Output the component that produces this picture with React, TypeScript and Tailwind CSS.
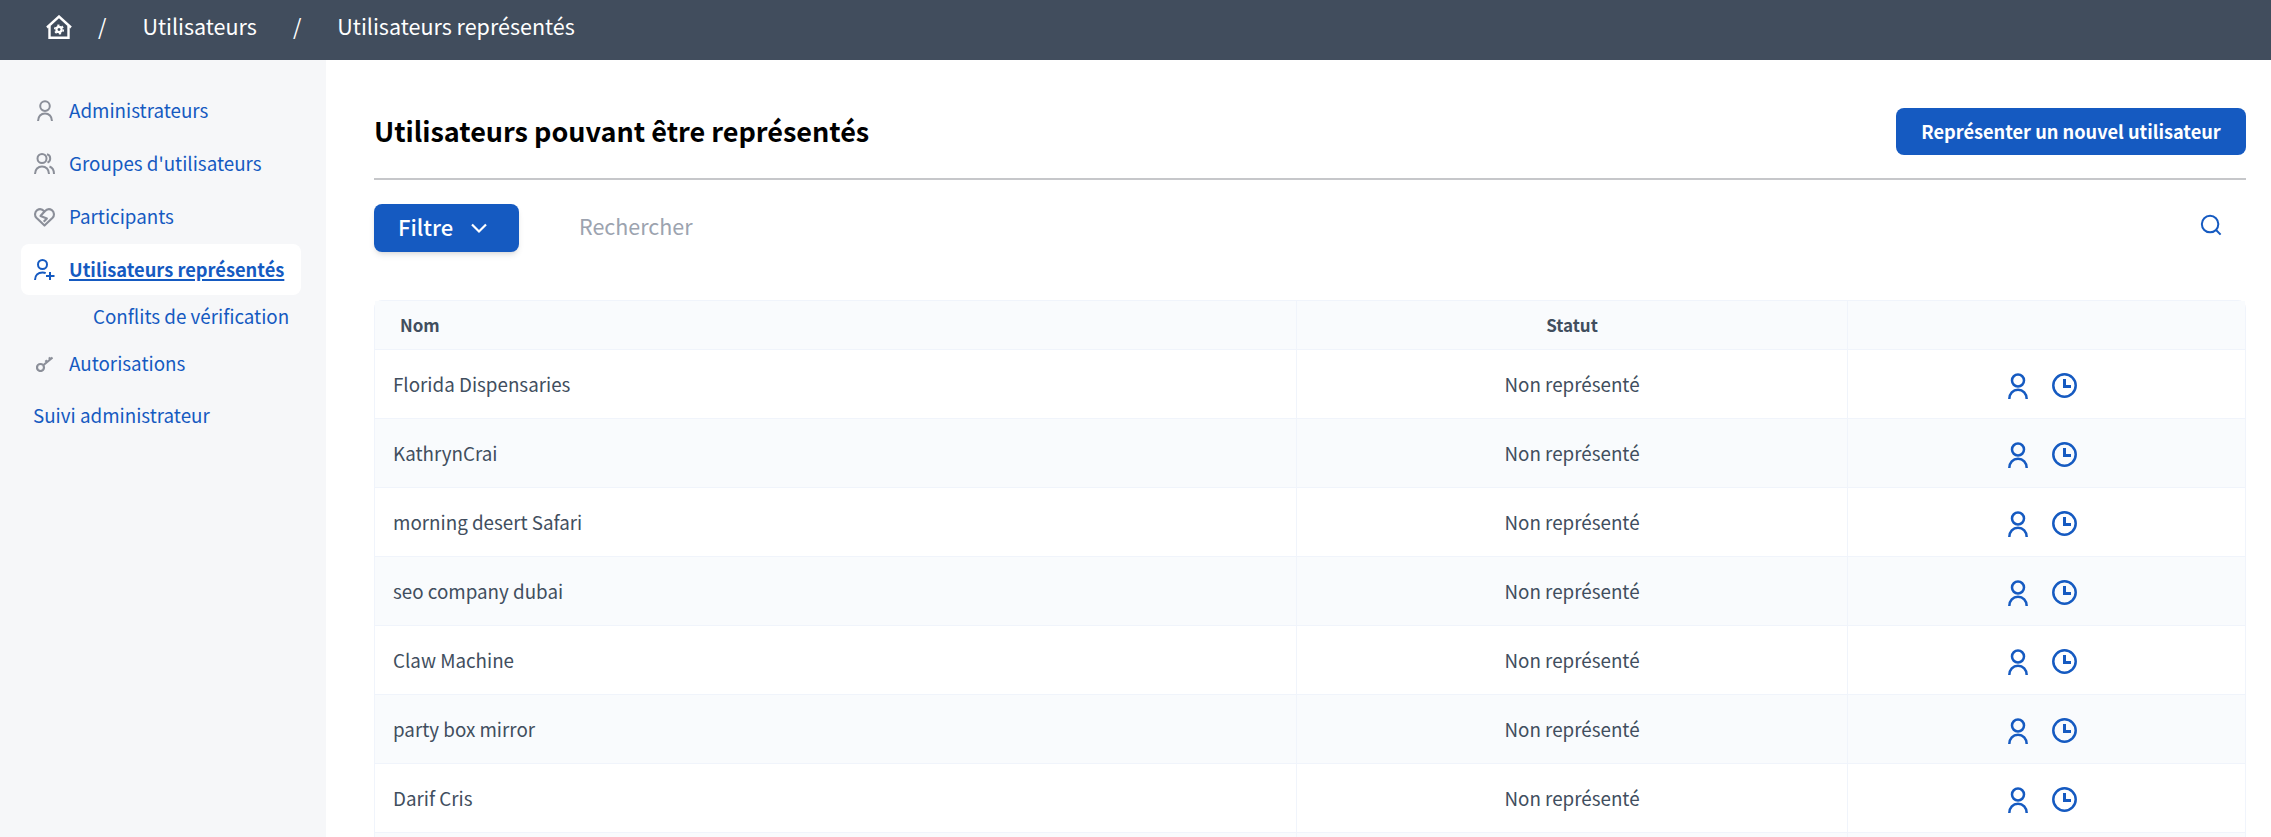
import React from 'react';

const rows = [
    'Florida Dispensaries',
    'KathrynCrai',
    'morning desert Safari',
    'seo company dubai',
    'Claw Machine',
    'party box mirror',
    'Darif Cris',
];

function UserIcon({ className }: { className: string }) {
    return (
        <svg viewBox="0 0 20 26" fill="none" stroke="currentColor" strokeWidth="2.500" className={className}>
            <circle cx="10" cy="7.500" r="6" />
            <path d="M1.300 26c0-5.500 3.700-9.300 8.700-9.300s8.700 3.800 8.700 9.300" />
        </svg>
    );
}

function UserPlusIcon({ className }: { className: string }) {
    return (
        <svg viewBox="0 0 21 21" fill="none" stroke="currentColor" strokeWidth="2" className={className}>
            <circle cx="8.500" cy="5.500" r="4.500" />
            <path d="M1 21c0-4.500 3-7.500 7.500-7.500 1.200 0 2.300.2 3.200.6" />
            <path d="M16 13v8M12 17h8.500" />
        </svg>
    );
}

function UsersIcon({ className }: { className: string }) {
    return (
        <svg viewBox="0 0 21 21" fill="none" stroke="currentColor" strokeWidth="2" className={className}>
            <circle cx="8" cy="5.500" r="4.500" />
            <path d="M1 21c0-4.500 3-7.500 7-7.500s7 3 7 7.500" />
            <path d="M13 1.300c2 .5 3.200 2.200 3.200 4.200s-1.200 3.500-2.700 4.200" />
            <path d="M15.500 13.500c2.800 1 4.500 4 4.500 7.500" />
        </svg>
    );
}

function HeartIcon({ className }: { className: string }) {
    return (
        <svg viewBox="0 0 22 20" fill="none" stroke="currentColor" strokeWidth="2.200" strokeLinejoin="round" className={className}>
            <path d="M11 19 2.500 10.800C.4 8.600.7 4.800 3.300 2.900c2.600-1.800 5.500-1 7.700 1.300 2.200-2.300 5.100-3.100 7.700-1.300 2.600 1.900 2.900 5.700.8 7.900L11 19Z" />
            <path d="M11 4.200 6.800 9l6.700 2.500-3.300 3.500" />
        </svg>
    );
}

function KeyIcon({ className }: { className: string }) {
    return (
        <svg viewBox="0 0 17 17" fill="none" stroke="currentColor" strokeWidth="2.200" className={className}>
            <circle cx="4.500" cy="12.500" r="3.500" />
            <path d="M7.500 10 16.500 2.500M11 7.200 9.500 5.300M14.500 4.300 13 2.400" />
        </svg>
    );
}

function ClockIcon({ className }: { className: string }) {
    return (
        <svg viewBox="0 0 25 25" fill="none" stroke="currentColor" strokeWidth="2.500" className={className}>
            <circle cx="12.500" cy="12.500" r="11.200" />
            <path d="M12.500 6v7.500H19" strokeWidth="3" />
        </svg>
    );
}

function HomeIcon({ className }: { className: string }) {
    return (
        <svg viewBox="0 0 26 24" fill="none" stroke="currentColor" strokeWidth="2.400" className={className}>
            <path d="M1 12.500 13 1.500l12 11" />
            <path d="M3.500 11v11.800h19V11" />
            <circle cx="13" cy="14.500" r="2.600" strokeWidth="2.200" />
            <circle cx="13" cy="14.500" r="4.300" strokeWidth="1.600" strokeDasharray="2.200 2.300" />
        </svg>
    );
}

function SideItem({ icon, label, active }: { icon?: React.ReactNode; label: string; active?: boolean }) {
    return (
        <a className={`flex h-[51px] items-center rounded-lg pl-[13px] ${active ? 'bg-white text-[18.300px] font-semibold underline decoration-2 underline-offset-2' : ''}`}>
            {icon && <span className={`mr-[14px] flex w-[21px] justify-center ${active ? 'text-[#155ac1]' : 'text-[#8b8f99]'}`}>{icon}</span>}
            <span>{label}</span>
        </a>
    );
}

export default function App() {
    return (
        <div className="h-[837px] overflow-hidden bg-white font-['Noto_Sans_CJK_SC',sans-serif] text-[18.800px] text-[#414e5e]">
            <header className="flex h-[60px] items-center bg-[#414d5d] pb-[7px] text-[21.500px] text-white">
                <HomeIcon className="ml-[46px] h-[24px] w-[26px]" />
                <span className="ml-[26px]">/</span>
                <span className="ml-[36px]">Utilisateurs</span>
                <span className="ml-[36px]">/</span>
                <span className="ml-[36px]">Utilisateurs représentés</span>
            </header>

            <div className="flex h-[777px]">
                <aside className="w-[326px] shrink-0 bg-[#f6f7f9] pl-[21px] pr-[25px] pt-[25px] text-[#155ac1]">
                    <div className="flex flex-col gap-[2px]">
                        <SideItem icon={<UserIcon className="h-[21px] w-[16px]" />} label="Administrateurs" />
                        <SideItem icon={<UsersIcon className="h-[21px] w-[21px]" />} label="Groupes d'utilisateurs" />
                        <SideItem icon={<HeartIcon className="h-[20px] w-[22px]" />} label="Participants" />
                        <SideItem icon={<UserPlusIcon className="h-[21px] w-[21px]" />} label="Utilisateurs représentés" active />
                    </div>
                    <div className="flex h-[43px] items-center pl-[72px]">Conflits de vérification</div>
                    <SideItem icon={<KeyIcon className="h-[17px] w-[17px]" />} label="Autorisations" />
                    <div className="flex h-[53px] items-center pl-[12px]">Suivi administrateur</div>
                </aside>

                <main className="min-w-0 flex-1 pl-[48px] pr-[25px]">
                    <div className="flex h-[120px] items-center justify-between border-b-2 border-[#c6c7ca] pt-[25px]">
                        <h1 className="text-[27px] font-bold text-black">Utilisateurs pouvant être représentés</h1>
                        <button className="h-[47px] w-[350px] rounded-lg bg-[#155ac1] text-[18.200px] font-semibold text-white">
                            Représenter un nouvel utilisateur
                        </button>
                    </div>

                    <div className="flex h-[120px] items-start pt-[24px]">
                        <button className="flex h-[48px] w-[145px] items-center rounded-lg bg-[#155ac1] pb-[3px] pl-[24px] text-[22px] font-medium text-white shadow-md">
                            Filtre
                            <svg viewBox="0 0 16 16" fill="none" stroke="currentColor" strokeWidth="2.200" className="ml-[18px] mt-[3px] h-[16px] w-[16px]">
                                <path d="M1 4.500 8 11.500l7-7" />
                            </svg>
                        </button>
                        <span className="ml-[60px] flex h-[45px] items-center text-[21.500px] text-[#9ca3af]">Rechercher</span>
                        <svg viewBox="0 0 24 24" fill="none" stroke="currentColor" strokeWidth="2.200" className="ml-auto mr-[24px] mt-[10px] h-[22px] w-[22px] text-[#155ac1]">
                            <circle cx="11" cy="11" r="9" />
                            <path d="m17.500 17.500 5 5" />
                        </svg>
                    </div>

                    <table className="w-full table-fixed border-separate border-spacing-0 rounded-t-lg border border-[#f0f4fb]">
                        <colgroup>
                            <col className="w-[922px]" />
                            <col className="w-[551px]" />
                            <col />
                        </colgroup>
                        <thead>
                            <tr className="h-[49px] bg-[#f9fbfd] text-[17px] font-semibold">
                                <th className="border-b border-r border-[#f0f4fb] pl-[25px] text-left font-semibold">Nom</th>
                                <th className="border-b border-r border-[#f0f4fb] text-center font-semibold">Statut</th>
                                <th className="border-b border-[#f0f4fb]" />
                            </tr>
                        </thead>
                        <tbody>
                            {rows.map((name, i) => (
                                <tr key={name} className={`h-[69px] ${i % 2 === 1 ? 'bg-[#f9fbfd]' : 'bg-white'}`}>
                                    <td className="border-b border-r border-[#f0f4fb] pl-[18px]">{name}</td>
                                    <td className="border-b border-r border-[#f0f4fb] text-center">Non représenté</td>
                                    <td className="border-b border-[#f0f4fb]">
                                        <div className="flex items-center justify-center gap-[24px] pr-[8px] pt-[3px] text-[#155ac1]">
                                            <UserIcon className="h-[26px] w-[20px]" />
                                            <ClockIcon className="h-[25px] w-[25px]" />
                                        </div>
                                    </td>
                                </tr>
                            ))}
                            <tr className="h-[69px] bg-[#f9fbfd]">
                                <td className="border-r border-[#f0f4fb]" />
                                <td className="border-r border-[#f0f4fb]" />
                                <td />
                            </tr>
                        </tbody>
                    </table>
                </main>
            </div>
        </div>
    );
}
